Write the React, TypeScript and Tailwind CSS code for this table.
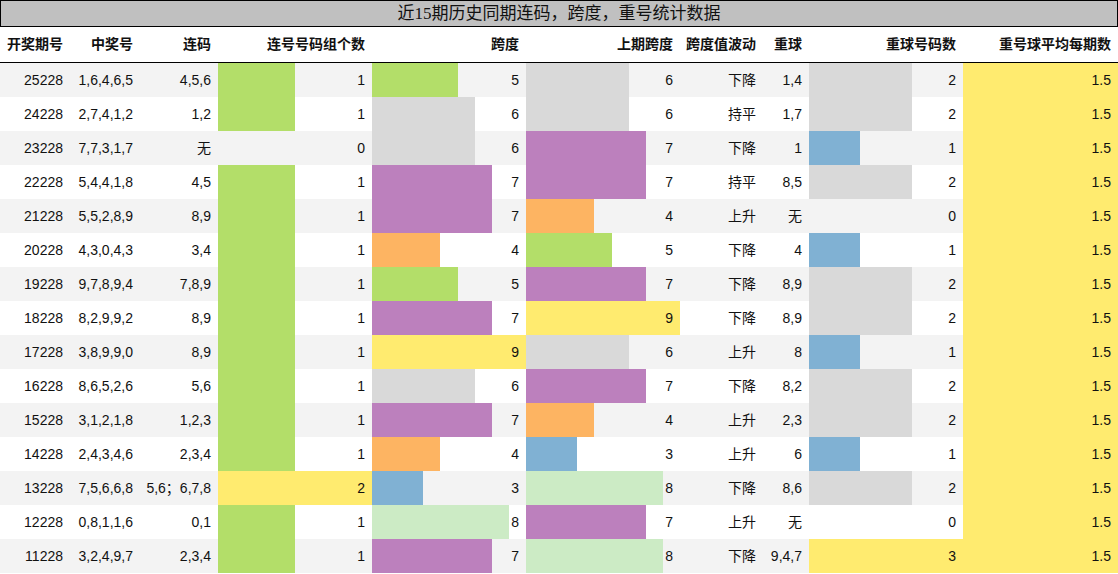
import React from 'react'

const GREEN = '#b3de69'
const GREY = '#d9d9d9'
const PURPLE = '#bc80bd'
const ORANGE = '#fdb462'
const BLUE = '#80b1d3'
const YELLOW = '#ffeb6f'
const LIGHT = '#ccebc5'

const spanColor: Record<number, string> = {
  3: BLUE,
  4: ORANGE,
  5: GREEN,
  6: GREY,
  7: PURPLE,
  8: LIGHT,
  9: YELLOW,
}
const linkColor: Record<number, string> = { 1: GREEN, 2: YELLOW }
const repeatColor: Record<number, string> = { 1: BLUE, 2: GREY, 3: YELLOW }

type Row = [string, string, string, number, number, number, string, string, number]

const rows: Row[] = [
  ['25228', '1,6,4,6,5', '4,5,6', 1, 5, 6, '下降', '1,4', 2],
  ['24228', '2,7,4,1,2', '1,2', 1, 6, 6, '持平', '1,7', 2],
  ['23228', '7,7,3,1,7', '无', 0, 6, 7, '下降', '1', 1],
  ['22228', '5,4,4,1,8', '4,5', 1, 7, 7, '持平', '8,5', 2],
  ['21228', '5,5,2,8,9', '8,9', 1, 7, 4, '上升', '无', 0],
  ['20228', '4,3,0,4,3', '3,4', 1, 4, 5, '下降', '4', 1],
  ['19228', '9,7,8,9,4', '7,8,9', 1, 5, 7, '下降', '8,9', 2],
  ['18228', '8,2,9,9,2', '8,9', 1, 7, 9, '下降', '8,9', 2],
  ['17228', '3,8,9,9,0', '8,9', 1, 9, 6, '上升', '8', 1],
  ['16228', '8,6,5,2,6', '5,6', 1, 6, 7, '下降', '8,2', 2],
  ['15228', '3,1,2,1,8', '1,2,3', 1, 7, 4, '上升', '2,3', 2],
  ['14228', '2,4,3,4,6', '2,3,4', 1, 4, 3, '上升', '6', 1],
  ['13228', '7,5,6,6,8', '5,6；6,7,8', 2, 3, 8, '下降', '8,6', 2],
  ['12228', '0,8,1,1,6', '0,1', 1, 8, 7, '上升', '无', 0],
  ['11228', '3,2,4,9,7', '2,3,4', 1, 7, 8, '下降', '9,4,7', 3],
]

const headers = ['开奖期号', '中奖号', '连码', '连号号码组个数', '跨度', '上期跨度', '跨度值波动', '重球', '重球号码数', '重号球平均每期数']

const cols = 'grid grid-cols-[70px_70px_78px_154px_154px_154px_83px_46px_154px_155px]'

function Cell({ children }: { children: React.ReactNode }) {
  return <div className="h-[34px] flex items-center justify-end pr-[7px] whitespace-nowrap">{children}</div>
}

// cell with a data bar behind the value, bar length = value / column max
function BarCell({ value, max, color, label }: { value: number; max: number; color?: string; label: string }) {
  return (
    <div className="relative h-[34px] flex items-center justify-end pr-[7px]">
      {color && value > 0 && (
        <div className="absolute left-0 top-0 bottom-0" style={{ width: `${(value / max) * 100}%`, backgroundColor: color }} />
      )}
      <span className="relative">{label}</span>
    </div>
  )
}

export default function App() {
  return (
    <div
      className="w-[1118px] h-[574px] bg-white text-[#111] text-[14px] overflow-hidden"
      style={{ fontFamily: '"Liberation Sans", "Noto Sans CJK SC", sans-serif' }}
    >
      <div
        className="h-[27px] bg-[#c0c0c0] border border-black flex items-center justify-center text-[17px] text-[#111]"
        style={{ fontFamily: '"Liberation Serif", "Noto Sans CJK SC", serif' }}
      >
        近15期历史同期连码，跨度，重号统计数据
      </div>

      <div className={`${cols} h-[36px] border-b border-black font-bold`}>
        {headers.map((h) => (
          <div key={h} className="flex items-center justify-end pr-[7px] whitespace-nowrap">
            {h}
          </div>
        ))}
      </div>

      {rows.map((r, i) => (
        <div key={r[0]} className={`${cols} ${i % 2 === 0 ? 'bg-[#f3f3f3]' : 'bg-white'}`}>
          <Cell>{r[0]}</Cell>
          <Cell>{r[1]}</Cell>
          <Cell>{r[2]}</Cell>
          <BarCell value={r[3]} max={2} color={linkColor[r[3]]} label={String(r[3])} />
          <BarCell value={r[4]} max={9} color={spanColor[r[4]]} label={String(r[4])} />
          <BarCell value={r[5]} max={9} color={spanColor[r[5]]} label={String(r[5])} />
          <Cell>{r[6]}</Cell>
          <Cell>{r[7]}</Cell>
          <BarCell value={r[8]} max={3} color={repeatColor[r[8]]} label={String(r[8])} />
          <BarCell value={1.5} max={1.5} color={YELLOW} label="1.5" />
        </div>
      ))}
    </div>
  )
}
